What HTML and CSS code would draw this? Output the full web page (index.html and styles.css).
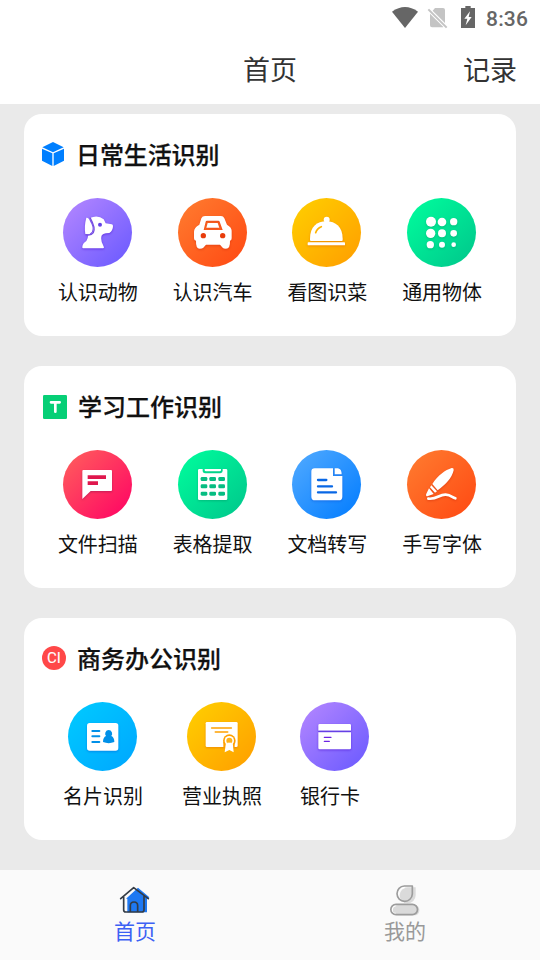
FILE: index.html
```
<!DOCTYPE html>
<html lang="zh-CN">
<head>
<meta charset="utf-8">
<title>首页</title>
<link rel="stylesheet" href="styles.css">
</head>
<body>
<div class="app">
  <div class="status">
    <svg class="wifi" width="26" height="21" viewBox="0 0 78 63"><path d="M0 14Q39-14 78 14L39 63Z"/></svg>
    <svg class="sim" width="20" height="21" viewBox="0 0 60 63"><path class="sim-body" d="M24 3H48Q54 3 54 9V48L17 11ZM9 20L49 60Q48 61 46 61H15Q9 61 9 55Z"/><path class="sim-line" d="M4 7L59 62"/></svg>
    <svg class="battery" width="14" height="22" viewBox="0 0 42 66"><path d="M13 0H29V6H42V66H0V6H13Z"/><path class="bolt" d="M27 16L10 38H19L14 58L32 33H23Z"/></svg>
    <span class="time">8:36</span>
  </div>
  <header class="header"><span></span><h1>首页</h1><a class="record">记录</a></header>

  <main class="content">
    <section class="card">
      <h2 class="title life"><svg width="22" height="24" viewBox="0 0 66 72"><path fill="#007fff" d="M33 0L65 16L33 31L1 16ZM0 20L31 34V72L0 56ZM66 20L35 34V72L66 56Z"/></svg>日常生活识别</h2>
      <div class="grid">
        <div class="item"><svg class="icon purple" viewBox="0 0 207 207"><g class="glyph"><path d="M80 60Q105 49 122 64L128 76L146 79Q150 80 150 84Q150 98 139 105Q114 106 115 117Q113 129 121 143Q125 151 120 151H61Q57 151 58 146Q59 136 70 129Q76 120 75 111Q91 108 92 95Q92 78 80 60Z"/><path d="M70 59Q78 58 81 70Q93 89 87 101Q79 112 67 108Q63 84 70 59Z"/></g><path d="M81 59Q99 91 91 104Q84 114 68 110" fill="none" stroke="#7650df" stroke-width="4"/><circle cx="111" cy="80" r="6" fill="#6542e7"/></svg><span>认识动物</span></div>
        <div class="item"><svg class="icon orange" viewBox="0 0 207 207"><g class="glyph"><path fill-rule="evenodd" d="M81 54H129Q136 54 139 61L147 80Q161 88 161 98V121Q161 128 156 128Q157 152 144 152Q136 152 134 149L126 140H84L76 149Q73 152 65 152Q53 152 54 128Q48 128 48 121V101Q48 89 64 80L70 61Q73 54 81 54ZM87 68Q84 68 83 71L77 96H134L125 71Q124 68 121 68Z"/><path d="M89 75H119L124 89H85Z"/></g><g fill="#e83c0b"><circle cx="76" cy="113" r="8"/><circle cx="134" cy="113" r="8"/></g></svg><span>认识汽车</span></div>
        <div class="item"><svg class="icon yellow" viewBox="0 0 207 207"><g class="glyph"><circle cx="104" cy="65" r="9"/><path d="M54 126V122C54 86 75 70 103 70S152 87 152 122V126Q152 129 149 129H57Q54 129 54 126Z"/><rect x="47" y="133" width="112" height="9" rx="2"/></g><path d="M71 104Q75 91 88 86" fill="none" stroke="#ffb400" stroke-width="5" stroke-linecap="round"/></svg><span>看图识菜</span></div>
        <div class="item"><svg class="icon green" viewBox="0 0 207 207"><g class="glyph"><circle cx="72" cy="71" r="15"/><circle cx="105" cy="72" r="13"/><circle cx="140" cy="71" r="11"/><circle cx="71" cy="106" r="14"/><circle cx="105" cy="106" r="12"/><circle cx="140" cy="106" r="10"/><circle cx="70" cy="140" r="11"/><circle cx="105" cy="140" r="9"/><circle cx="140" cy="140" r="7"/></g></svg><span>通用物体</span></div>
      </div>
    </section>

    <section class="card">
      <h2 class="title work"><svg width="24" height="24" viewBox="0 0 72 72"><rect width="72" height="72" rx="4" fill="#06cf76"/><path d="M24 22H50M37 22V50" fill="none" stroke="#fff" stroke-width="8" stroke-linecap="round"/></svg>学习工作识别</h2>
      <div class="grid">
        <div class="item"><svg class="icon red" viewBox="0 0 207 207"><g class="glyph"><path d="M61 60H144Q147 60 147 63V120Q147 123 144 123H83L58 147V63Q58 60 61 60Z"/></g><path fill="#df174d" d="M74 76H129V87H74ZM74 94H105V105H74Z"/></svg><span>文件扫描</span></div>
        <div class="item"><svg class="icon green" viewBox="0 0 207 207"><g class="glyph"><path d="M64 57H74V64Q75 70 81 70H127Q134 69 134 62V57H144Q148 57 148 61V146Q148 150 144 150H64Q60 150 60 146V61Q60 57 64 57Z"/><path d="M80 57H129V61Q129 64 125 64H84Q80 64 80 61Z"/></g><g fill="#06bd82"><rect x="68" y="81" width="20" height="12" rx="4"/><rect x="94" y="81" width="20" height="12" rx="4"/><rect x="121" y="81" width="20" height="12" rx="4"/><rect x="68" y="103" width="20" height="12" rx="4"/><rect x="94" y="103" width="20" height="12" rx="4"/><rect x="121" y="103" width="20" height="12" rx="4"/><rect x="68" y="125" width="20" height="12" rx="4"/><rect x="94" y="125" width="20" height="12" rx="4"/><rect x="121" y="125" width="20" height="12" rx="4"/></g></svg><span>表格提取</span></div>
        <div class="item"><svg class="icon blue" viewBox="0 0 207 207"><g class="glyph"><path d="M68 55H123V78H151V140Q151 151 140 151H69Q58 151 58 140V65Q58 55 68 55Z"/><path d="M128 55H138Q149 57 149 73H128Z"/></g><path d="M78 90H103M78 109H120M78 127H132" stroke="#0867e5" stroke-width="7" stroke-linecap="round"/></svg><span>文档转写</span></div>
        <div class="item"><svg class="icon orange" viewBox="0 0 207 207"><g class="glyph"><path d="M76 102C93 75 115 60 134 54Q141 53 140 61C135 84 114 106 92 121ZM73 106L90 124L84 128L69 112ZM66 115L80 132L61 139Q55 138 58 131Z"/><path d="M64 146C91 149 96 133 116 134C132 135 135 142 145 145" fill="none" stroke="#fff" stroke-width="8" stroke-linecap="round"/></g></svg><span>手写字体</span></div>
      </div>
    </section>

    <section class="card">
      <h2 class="title biz"><span class="ci">CI</span>商务办公识别</h2>
      <div class="row">
        <div class="item"><svg class="icon cyan" viewBox="0 0 207 207"><g class="glyph"><rect x="57" y="63" width="94" height="83" rx="8"/></g><path d="M73 87H94M73 103H94M73 120H94" stroke="#0090e8" stroke-width="6" stroke-linecap="round"/><path fill="#0090e8" d="M122 84A11 11 0 0 1 130 102Q139 106 139 120Q122 127 105 120Q105 106 114 102A11 11 0 0 1 122 84Z"/></svg><span>名片识别</span></div>
        <div class="item"><svg class="icon yellow" viewBox="0 0 207 207"><g class="glyph"><rect x="56" y="60" width="96" height="75" rx="4"/></g><path d="M74 78H133M85 90H122" stroke="#fea000" stroke-width="5" stroke-linecap="round"/><circle cx="127" cy="116" r="19" fill="#ffa000"/><path fill="#ffa000" d="M109 120H143V136H109Z"/><path fill="#fff" d="M117 121H137L140 151L127 144L113 151Z"/><circle cx="127" cy="116" r="14" fill="#fff"/><circle cx="127" cy="116" r="9" fill="#ffb21a"/><path fill="#fff" d="M121 122H133V133H121Z"/></svg><span>营业执照</span></div>
        <div class="item bank"><svg class="icon purple" viewBox="0 0 207 207"><g class="glyph"><path d="M59 66H149Q153 66 153 70V86H55V70Q55 66 59 66ZM55 91H153V138Q153 142 149 142H59Q55 142 55 138Z"/></g><path d="M55 88H153" stroke="#6540e5" stroke-width="4"/><path d="M73 106H93M73 118H88" stroke="#6d25e4" stroke-width="4" stroke-linecap="round"/></svg><span>银行卡</span></div>
      </div>
    </section>
  </main>

  <nav class="tabs">
    <a class="tab active"><svg width="32" height="32" viewBox="0 0 96 96"><path fill="#1e78f2" d="M57 5L91 34L84 40V79H25V38L21 38Z"/><g fill="none" stroke="#333b45" stroke-width="5" stroke-linecap="round" stroke-linejoin="round"><path d="M5 38L44 5L88 38M14 34V72Q14 78 20 78H69Q75 78 75 72V31M34 78V59Q34 48 45 48T56 59V78"/></g></svg><span>首页</span></a>
    <a class="tab"><svg width="32" height="32" viewBox="-2 0 96 96"><path fill="#dadada" d="M54 4H78V28A24 24 0 1 1 54 4ZM25 57H79A17 17 0 0 1 79 88H25A15 15 0 0 1 25 57Z"/><path fill="none" stroke="#fff" stroke-width="5" d="M45 5A20 20 0 0 0 28 38M18 83A12 12 0 0 1 18 59"/><path fill="none" stroke="#9c9c9c" stroke-width="5" stroke-linejoin="round" d="M44 0H68V24A23 23 0 1 1 44 0ZM19 55H68A15 15 0 0 1 68 86H19A15 15 0 0 1 19 55Z"/></svg><span>我的</span></a>
  </nav>
</div>
</body>
</html>
```
FILE: styles.css
```
* { box-sizing: border-box; }
body { margin: 0; font-family: "Noto Sans CJK SC", sans-serif; color: #111; }
svg { display: block; flex: none; overflow: visible; }
.app { width: 540px; height: 960px; display: flex; flex-direction: column; background: #eaeaea; overflow: hidden; }
.status { height: 36px; background: #fff; display: flex; justify-content: flex-end; align-items: flex-start; padding: 6px 12px 0 0; color: #666; fill: #666; }
.wifi { margin: 1px 9px 0 0; }
.sim { margin: 1px 14px 0 0; }
.sim-body { fill: #c4c4c4; }
.sim-line { stroke: #c4c4c4; stroke-width: 6; }
.bolt { fill: #fff; }
.time { width: 42px; margin-left: 11px; font: 500 21px/26px Roboto, sans-serif; letter-spacing: .2px; }
.header { height: 68px; background: #fff; display: grid; grid-template-columns: 1fr auto 1fr; align-items: start; padding: 0 23px; color: #333; }
.header h1, .record { margin: 0; font-size: 27px; font-weight: 400; line-height: 66px; }
.record { justify-self: end; }
.content { flex: 1; padding: 10px 24px 0; display: flex; flex-direction: column; gap: 30px; }
.card { height: 222px; background: #fff; border-radius: 18px; }
.title { margin: 0; height: 84px; padding-left: 18px; display: flex; align-items: center; font-size: 24px; font-weight: 500; line-height: 80px; padding-bottom: 4px; -webkit-text-stroke: .25px #111; }
.life { gap: 12px; letter-spacing: -.1px; }
.work { gap: 11px; padding-left: 19px; }
.biz { gap: 11px; }
.work svg { margin-top: 2px; }
.ci { width: 24px; height: 24px; border-radius: 50%; background: #ff4848; color: #fff; text-align: center; font: 400 15px/24px Roboto, sans-serif; -webkit-text-stroke: .1px #fff; }
.grid { display: grid; grid-template-columns: repeat(4, 1fr); padding: 0 16.5px; }
.row { display: flex; gap: 39px; padding-left: 39px; }
.item { display: flex; flex-direction: column; align-items: center; font-size: 20px; line-height: 30px; white-space: nowrap; }
.item span { margin-top: 10px; }
.grid .icon, .row .icon { margin-right: 1px; }
.bank { align-items: flex-start; margin-left: -1px; }
.icon { width: 69px; height: 69px; border-radius: 50%; }
.glyph { fill: #fff; filter: drop-shadow(0 3px 3px rgba(40, 0, 60, .28)); }
.purple { background: linear-gradient(135deg, #b688ff, #6858ff); }
.orange { background: linear-gradient(135deg, #ff7d30, #ff4812); }
.yellow { background: linear-gradient(135deg, #ffd000, #ff9d00); }
.green { background: linear-gradient(135deg, #00ff9d, #00c58b); }
.red { background: linear-gradient(135deg, #ff625c, #ff0064); }
.blue { background: linear-gradient(135deg, #53abff, #007bff); }
.cyan { background: linear-gradient(135deg, #00cbff, #00a6ff); }
.yellow .glyph { filter: drop-shadow(0 3px 3px rgba(210, 70, 0, .35)); }
.orange .glyph { filter: drop-shadow(0 3px 3px rgba(180, 20, 0, .35)); }
.green .glyph { filter: drop-shadow(0 3px 3px rgba(0, 110, 70, .3)); }
.blue .glyph, .cyan .glyph { filter: drop-shadow(0 3px 3px rgba(0, 50, 190, .35)); }
.purple .glyph { filter: drop-shadow(0 3px 3px rgba(65, 0, 200, .5)); }
.tabs { height: 90px; background: #fafafa; display: grid; grid-template-columns: 1fr 1fr; }
.tab { display: flex; flex-direction: column; align-items: center; padding-top: 16px; font-size: 21px; line-height: 28px; color: #999; }
.tab span { margin-top: -2px; }
.active { color: #3c61f4; }
```
